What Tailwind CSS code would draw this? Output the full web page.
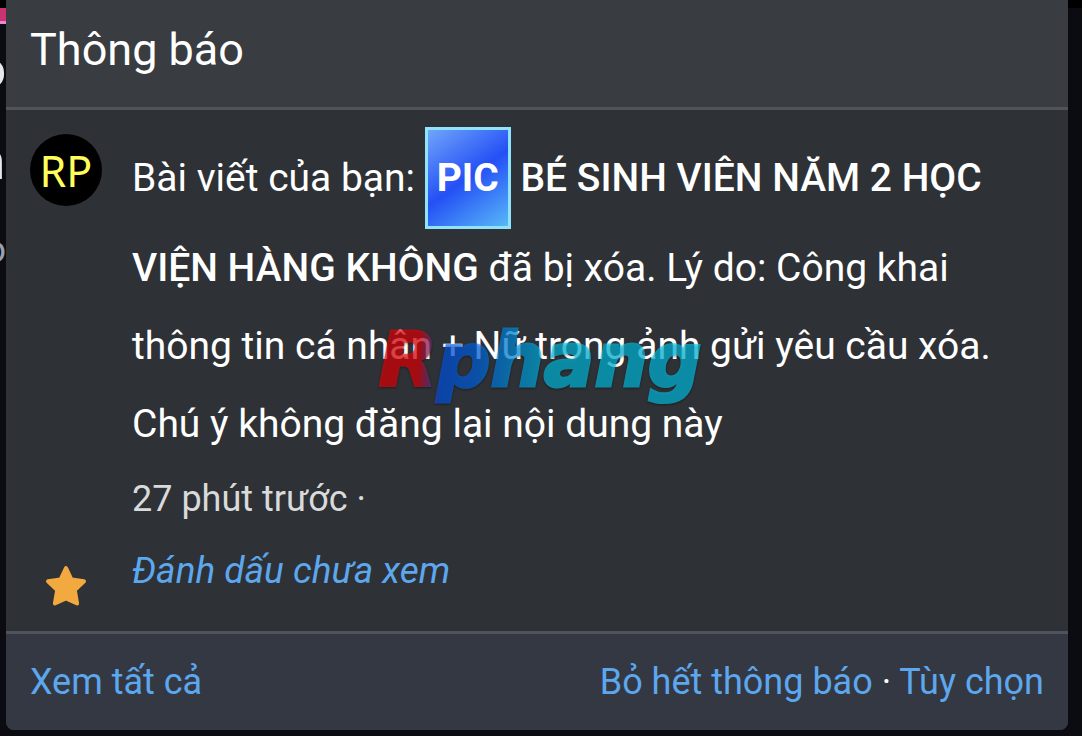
<!DOCTYPE html>
<html lang="vi">
<head>
<meta charset="utf-8">
<meta name="viewport" content="width=device-width, initial-scale=1">
<title>Thông báo</title>
<script src="https://cdn.jsdelivr.net/npm/@tailwindcss/browser@4"></script>
</head>
<body class="relative min-h-screen overflow-x-hidden bg-[#0b0c12] font-[Roboto,sans-serif] text-white">
  <!-- Page content showing behind the panel -->
  <div class="absolute inset-x-0 top-0 h-2 bg-black" aria-hidden="true"></div>
  <div class="absolute top-2 left-0 h-[300px] w-[6px] overflow-hidden" aria-hidden="true">
    <div class="h-4 border-b-[3px] border-[#e58ad0] bg-[#cb3274]"></div>
    <span class="absolute top-[34px] right-0 text-[52px] leading-[56px] font-medium text-gray-200">o</span>
    <span class="absolute top-[126px] right-px text-[52px] leading-[56px] font-medium text-gray-200">n</span>
    <span class="absolute top-[220px] right-0 text-[36px] leading-[44px] text-gray-400">o</span>
  </div>

  <section class="relative mr-[14px] mb-[6px] ml-[6px] overflow-hidden rounded-b-lg bg-[#2e3135]">
    <header class="border-b-[3px] border-[#505359] bg-[#393c40] px-6 pt-[22px] pb-[29px]">
      <h1 class="text-[45px] leading-[56px]">Thông báo</h1>
    </header>

    <article class="flex gap-[30px] px-6 pt-[17px] pb-6">
      <div class="flex w-[72px] shrink-0 flex-col items-center justify-between pt-[7px]">
        <div class="flex size-[72px] items-center justify-center rounded-full bg-black font-['Noto_Sans',sans-serif] text-[43px] leading-none text-[#ffff5c]">RP</div>
        <button type="button" aria-label="Đánh dấu">
          <svg class="block size-[42px]" viewBox="0 0 42 42" fill="#f2a93f" stroke="#f2a93f" stroke-width="4" stroke-linejoin="round"><path d="M21 3l5.500 11.500 12.500 1.800-9.200 8.700 2.300 13.500L21 33.500 9.900 38.500l2.300-13.500L3 16.300l12.500-1.800z"/></svg>
        </button>
      </div>
      <div class="min-w-0 flex-1">
        <p class="text-[39px] leading-[78px]">Bài viết của bạn: <a href="#" class="font-medium"><span class="inline-block border-[3px] border-[#8fe3fa] bg-linear-[145deg] from-[#70a5fb] via-[#2450f5] to-[#58b8f8] p-[9px] font-bold">PIC</span> BÉ SINH VIÊN NĂM 2 HỌC VIỆN HÀNG KHÔNG</a> đã bị xóa. Lý do: Công khai thông tin cá nhân + Nữ trong ảnh gửi yêu cầu xóa. Chú ý không đăng lại nội dung này</p>
        <p class="text-[36px] leading-[72px] text-[#d9dadb]"><time>27 phút trước</time> ·</p>
        <button type="button" class="block text-[37px] leading-[72px] text-[#5ca7ee] italic">Đánh dấu chưa xem</button>
      </div>
    </article>

    <footer class="flex justify-between border-t-[3px] border-[#50535c] bg-[#343842] px-6 py-[21px] text-[36px] leading-[54px]">
      <a href="#" class="text-[#5ca7ee]">Xem tất cả</a>
      <div><a href="#" class="text-[#5ca7ee]">Bỏ hết thông báo</a> · <a href="#" class="text-[#5ca7ee]">Tùy chọn</a></div>
    </footer>

    <!-- Watermark -->
    <svg class="pointer-events-none absolute top-[320px] left-[364px] h-[100px] w-[350px] drop-shadow-[0_1px_1px_rgb(0_0_0/0.6)]" viewBox="0 0 350 100" role="img" aria-label="Rphang">
      <defs>
        <linearGradient id="mark" gradientUnits="userSpaceOnUse" x1="10" y1="40" x2="332" y2="60">
          <stop offset="0" stop-color="#ff0008"/>
          <stop offset="0.120" stop-color="#ff0008"/>
          <stop offset="0.190" stop-color="#005cff"/>
          <stop offset="0.300" stop-color="#0070ff"/>
          <stop offset="0.520" stop-color="#00d0f8"/>
          <stop offset="1" stop-color="#00d5ff"/>
        </linearGradient>
      </defs>
      <text x="9" y="66" font-family="DejaVu Sans" font-weight="bold" font-style="italic" font-size="75" fill="url(#mark)" stroke="url(#mark)" stroke-width="3" opacity="0.6">Rphang</text>
    </svg>
  </section>
</body>
</html>
